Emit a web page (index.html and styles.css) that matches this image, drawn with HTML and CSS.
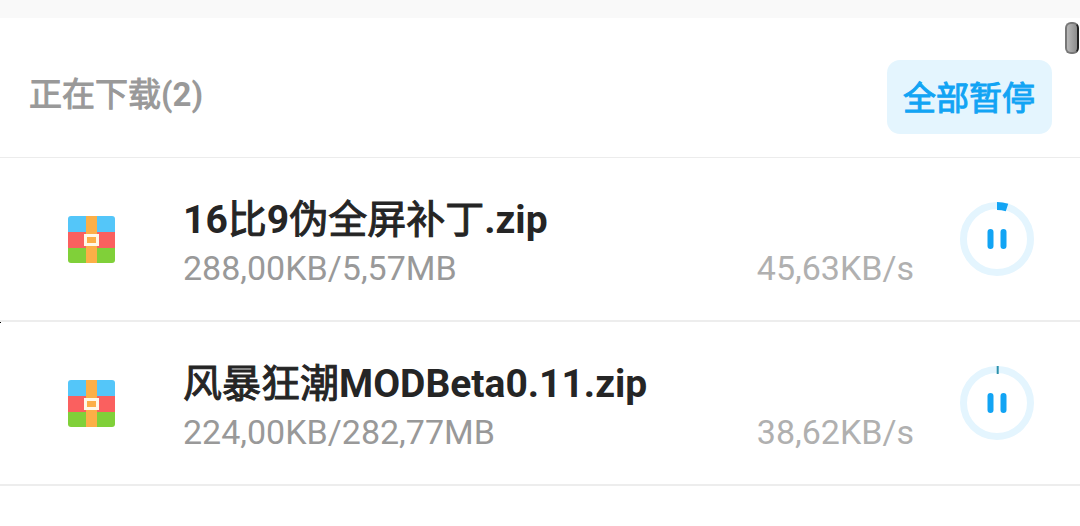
FILE: index.html
```html
<!DOCTYPE html>
<html lang="zh-CN">
<head>
<meta charset="utf-8">
<meta name="viewport" content="width=device-width, initial-scale=1">
<title>正在下载</title>
<link rel="stylesheet" href="styles.css">
</head>
<body>
<svg class="defs" aria-hidden="true">
  <symbol id="archive" viewBox="0 0 47 47">
    <path fill="#54c6f9" d="M3 0h41a3 3 0 0 1 3 3v13H0V3a3 3 0 0 1 3-3z"/>
    <path fill="#fa605f" d="M0 16h47v16H0z"/>
    <path fill="#80d039" d="M0 32h47v12a3 3 0 0 1-3 3H3a3 3 0 0 1-3-3z"/>
    <path fill="#fcaf47" d="M18 0h11v47H18z"/>
    <path fill="#fcaf47" stroke="#fff8e8" stroke-width="3" d="M17.500 19.500h12v9h-12z"/>
  </symbol>
</svg>
<div class="band"></div>
<main class="downloads">
  <header class="header">
    <h1 class="heading"><span class="han">正在下载</span>(2)</h1>
    <button class="pause-all" type="button"><span class="han">全部暂停</span></button>
  </header>
  <ul class="list">
    <li class="item">
      <svg class="file-icon" aria-hidden="true"><use href="#archive"/></svg>
      <div class="info">
        <h2 class="name">16<span class="han">比</span>9<span class="han">伪全屏补丁</span>.zip</h2>
        <div class="meta"><span>288,00KB/5,57MB</span><span class="speed">45,63KB/s</span></div>
      </div>
      <button class="toggle" type="button" aria-label="暂停">
        <svg class="ring" viewBox="0 0 74 74" fill="none" aria-hidden="true">
          <circle cx="37" cy="37" r="33.500" stroke="#e4f5fe" stroke-width="7"/>
          <path d="M37 4a33 33 0 0 1 10 1.550" stroke="#12a4f4" stroke-width="8"/>
          <path d="M30.500 30v14M43.500 30v14" stroke="#12a4f4" stroke-width="6" stroke-linecap="round"/>
        </svg>
      </button>
    </li>
    <li class="item">
      <svg class="file-icon" aria-hidden="true"><use href="#archive"/></svg>
      <div class="info">
        <h2 class="name"><span class="han">风暴狂潮</span>MODBeta0.11.zip</h2>
        <div class="meta"><span>224,00KB/282,77MB</span><span class="speed">38,62KB/s</span></div>
      </div>
      <button class="toggle" type="button" aria-label="暂停">
        <svg class="ring" viewBox="0 0 74 74" fill="none" aria-hidden="true">
          <circle cx="37" cy="37" r="33.500" stroke="#e4f5fe" stroke-width="7"/>
          <path d="M37.700 0v8" stroke="#2b91ac" stroke-width="2"/>
          <path d="M30.500 30v14M43.500 30v14" stroke="#12a4f4" stroke-width="6" stroke-linecap="round"/>
        </svg>
      </button>
    </li>
  </ul>
</main>
<div class="scroll-thumb"></div>
<div class="speck"></div>
</body>
</html>
```
FILE: styles.css
```css
* { box-sizing: border-box; }
body {
  margin: 0;
  position: relative;
  background: #fff;
  font-family: Roboto, "Noto Sans CJK SC", sans-serif;
}
.defs { position: absolute; width: 0; height: 0; }
.band { height: 18px; background: #f9f9f9; }
.header {
  display: flex;
  align-items: center;
  justify-content: space-between;
  height: 140px;
  padding: 18px 28px 0 29px;
  border-bottom: 1px solid #ececec;
}
.heading {
  margin: 0;
  padding-bottom: 4px;
  font-size: 33px;
  line-height: 40px;
  font-weight: 700;
  color: #999;
}
/* Semi-bold Han glyphs: regular weight, thickened by an outline */
.han {
  font-weight: 400;
  -webkit-text-stroke: 1px currentColor;
}
.pause-all {
  height: 74px;
  padding: 4px 17px 0 16px;
  border: 0;
  border-radius: 13px;
  background: #e4f5fe;
  color: #12a4f4;
  font: 400 33px/40px Roboto, "Noto Sans CJK SC", sans-serif;
}
.list { margin: 0; padding: 0; list-style: none; }
.item {
  display: flex;
  align-items: center;
  height: 164px;
  padding: 0 46px 0 68px;
  border-bottom: 2px solid #ededed;
}
.file-icon { flex: none; width: 47px; height: 47px; }
.info { flex: 1; min-width: 0; margin: 0 46px 0 68px; padding-top: 6px; }
.name {
  margin: 0;
  font-size: 39px;
  line-height: 52px;
  font-weight: 700;
  color: #252525;
}
.meta {
  display: flex;
  justify-content: space-between;
  font-size: 34px;
  line-height: 44px;
  color: #999;
}
.speed { color: #b0b0b0; }
.toggle {
  flex: none;
  width: 74px;
  height: 74px;
  padding: 0;
  border: 0;
  border-radius: 50%;
  background: none;
}
.ring { display: block; width: 74px; height: 74px; }
.scroll-thumb {
  position: absolute;
  top: 22px;
  right: 1px;
  width: 14px;
  height: 32px;
  border: 2px solid #777;
  border-right-color: #222;
  border-radius: 6px;
  background: linear-gradient(90deg, #b8b8b8, #8c8c8c);
}
.speck {
  position: absolute;
  top: 322px;
  left: 0;
  width: 1px;
  height: 1px;
  background: #000;
}
```
